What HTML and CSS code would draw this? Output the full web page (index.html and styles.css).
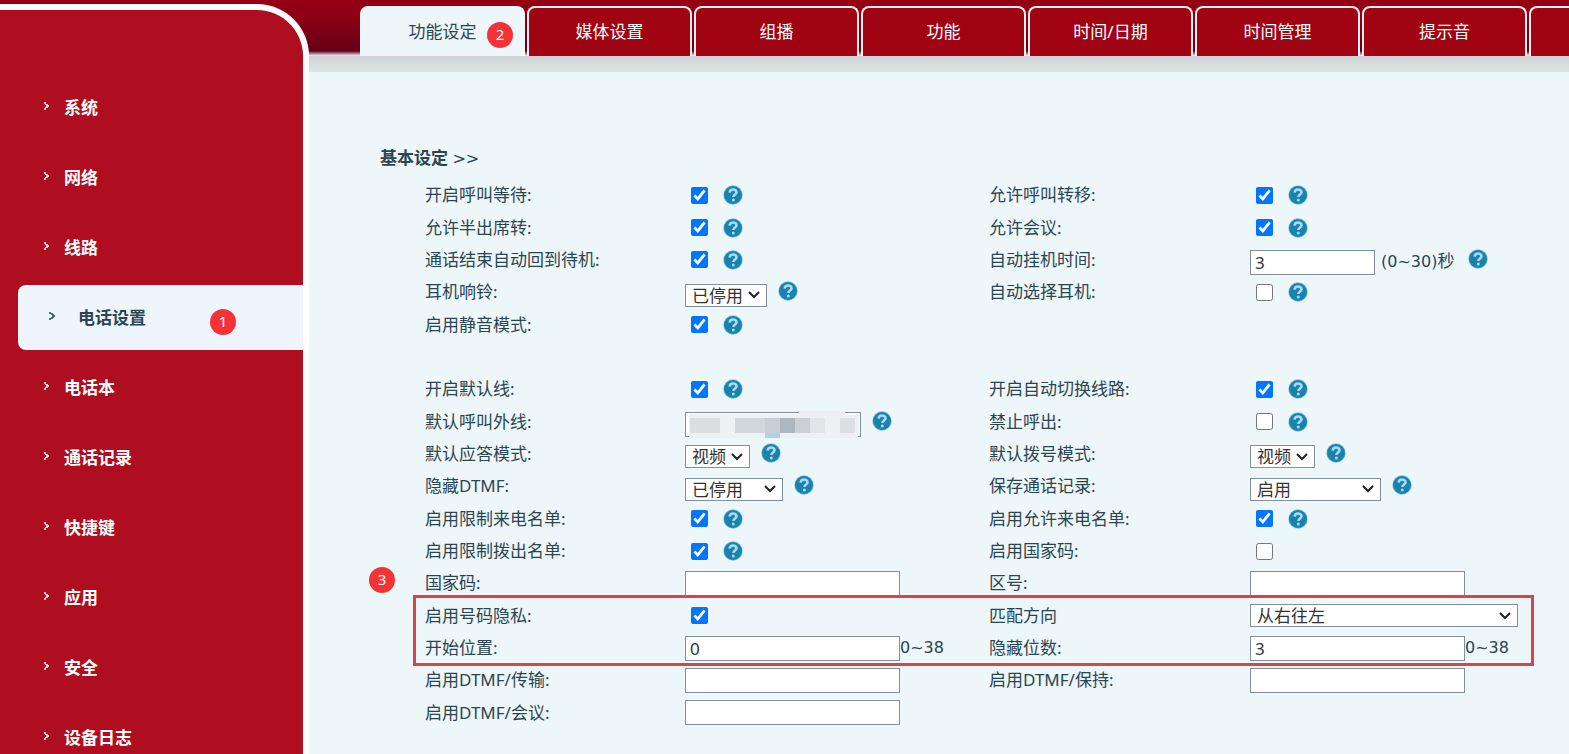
FILE: index.html
```html
<!DOCTYPE html>
<html lang="zh-CN">
<head>
    <meta charset="UTF-8">
    <meta name="viewport" content="width=device-width, initial-scale=1.0">
    <title>电话设置</title>
    <link rel="stylesheet" href="styles.css">
</head>
<body>
    <!-- shared icons -->
    <svg class="defs" width="0" height="0">
        <symbol id="help" viewBox="0 0 20 20">
            <circle cx="10" cy="10" r="9.7" fill="#7cc0dc"/>
            <circle cx="10" cy="10" r="9" fill="#1b82ae"/>
            <path d="M6.6 7.600C6.800 5.500 8.200 4.500 10.100 4.500c1.900 0 3.400 1 3.400 2.800 0 2.300-3.100 2.300-3.100 4.800" fill="none" stroke="#a5dcf2" stroke-width="2.600"/>
            <circle cx="10.300" cy="15" r="1.500" fill="#a5dcf2"/>
        </symbol>
        <symbol id="arrow" viewBox="0 0 8 10">
            <path d="M1 1h2v2h2v1h1v2H5v1H3v2H1V7h1V6h1V4H2V3H1z" fill="currentColor"/>
        </symbol>
        <symbol id="arrowOn" viewBox="0 0 8 10">
            <path d="M1 1h2v1h2v1h1v1h1v2H6v1H5v1H3v1H1V7h2V6h1V4H3V3H1z" fill="currentColor"/>
        </symbol>
    </svg>

    <nav class="sidebar">
        <a href="#"><svg class="arrow"><use href="#arrow"/></svg>系统</a>
        <a href="#"><svg class="arrow"><use href="#arrow"/></svg>网络</a>
        <a href="#"><svg class="arrow"><use href="#arrow"/></svg>线路</a>
        <a href="#" class="active"><svg class="arrow"><use href="#arrowOn"/></svg>电话设置<span class="badge badge1">1</span></a>
        <a href="#"><svg class="arrow"><use href="#arrow"/></svg>电话本</a>
        <a href="#"><svg class="arrow"><use href="#arrow"/></svg>通话记录</a>
        <a href="#"><svg class="arrow"><use href="#arrow"/></svg>快捷键</a>
        <a href="#"><svg class="arrow"><use href="#arrow"/></svg>应用</a>
        <a href="#"><svg class="arrow"><use href="#arrow"/></svg>安全</a>
        <a href="#"><svg class="arrow"><use href="#arrow"/></svg>设备日志</a>
    </nav>

    <main>
        <div class="tabs">
            <a href="#" class="active">功能设定<span class="badge badge2">2</span></a>
            <a href="#">媒体设置</a>
            <a href="#">组播</a>
            <a href="#">功能</a>
            <a href="#">时间/日期</a>
            <a href="#">时间管理</a>
            <a href="#">提示音</a>
            <a href="#" aria-label="更多"></a>
        </div>
        <div class="shade"></div>

        <h2>基本设定 <span class="wide">&gt;&gt;</span></h2>

        <form class="settings">
            <label class="c1 r1" for="callWaiting">开启呼叫等待:</label>
            <div class="c2 r1"><input type="checkbox" id="callWaiting" checked><svg class="help"><use href="#help"/></svg></div>
            <label class="c3 r1" for="transfer">允许呼叫转移:</label>
            <div class="c4 r1"><input type="checkbox" id="transfer" checked><svg class="help"><use href="#help"/></svg></div>

            <label class="c1 r2" for="semi">允许半出席转:</label>
            <div class="c2 r2"><input type="checkbox" id="semi" checked><svg class="help"><use href="#help"/></svg></div>
            <label class="c3 r2" for="conference">允许会议:</label>
            <div class="c4 r2"><input type="checkbox" id="conference" checked><svg class="help"><use href="#help"/></svg></div>

            <label class="c1 r3" for="onHook">通话结束自动回到待机:</label>
            <div class="c2 r3"><input type="checkbox" id="onHook" checked><svg class="help"><use href="#help"/></svg></div>
            <label class="c3 r3" for="hangTime">自动挂机时间:</label>
            <div class="c4 r3 low"><input type="text" class="short" id="hangTime" value="3"><span class="unit"><span class="wide">(0~30)</span>秒</span><svg class="help"><use href="#help"/></svg></div>

            <label class="c1 r4" for="ring">耳机响铃:</label>
            <div class="c2 r4 low"><select class="w82" id="ring"><option>已停用</option></select><svg class="help"><use href="#help"/></svg></div>
            <label class="c3 r4" for="headset">自动选择耳机:</label>
            <div class="c4 r4"><input type="checkbox" id="headset"><svg class="help"><use href="#help"/></svg></div>

            <label class="c1 r5" for="mute">启用静音模式:</label>
            <div class="c2 r5"><input type="checkbox" id="mute" checked><svg class="help"><use href="#help"/></svg></div>

            <label class="c1 r7" for="defLine">开启默认线:</label>
            <div class="c2 r7"><input type="checkbox" id="defLine" checked><svg class="help"><use href="#help"/></svg></div>
            <label class="c3 r7" for="autoLine">开启自动切换线路:</label>
            <div class="c4 r7"><input type="checkbox" id="autoLine" checked><svg class="help"><use href="#help"/></svg></div>

            <label class="c1 r8" for="extLine">默认呼叫外线:</label>
            <div class="c2 r8 low">
                <span class="masked">
                    <input type="text" id="extLine">
                    <svg class="mosaic" viewBox="0 0 176 28">
                        <path fill="#edf1f4" d="M4 3h110V0h46v4h14v18h-1v5H4z"/>
                        <path fill="#dadee1" d="M5 7h30v15H5z"/>
                        <path fill="#d2d7dc" d="M50 7h30v15H50z"/>
                        <path fill="#c8cfd5" d="M80 7h15v15H80z"/>
                        <path fill="#aeb7be" d="M95 7h15v15H95z"/>
                        <path fill="#cbd0d5" d="M110 7h15v15h-15z"/>
                        <path fill="#e1e4e8" d="M125 7h15v15h-15z"/>
                        <path fill="#dce0e3" d="M155 7h15v15h-15z"/>
                        <path fill="#b5d1e1" d="M80 22h15v5H80z"/>
                    </svg>
                </span>
                <svg class="help"><use href="#help"/></svg>
            </div>
            <label class="c3 r8" for="forbid">禁止呼出:</label>
            <div class="c4 r8"><input type="checkbox" id="forbid"><svg class="help"><use href="#help"/></svg></div>

            <label class="c1 r9" for="answerMode">默认应答模式:</label>
            <div class="c2 r9 low"><select class="w65" id="answerMode"><option>视频</option></select><svg class="help"><use href="#help"/></svg></div>
            <label class="c3 r9" for="dialMode">默认拨号模式:</label>
            <div class="c4 r9 low"><select class="w65" id="dialMode"><option>视频</option></select><svg class="help"><use href="#help"/></svg></div>

            <label class="c1 r10" for="hideDtmf">隐藏DTMF:</label>
            <div class="c2 r10 low"><select class="w98" id="hideDtmf"><option>已停用</option></select><svg class="help"><use href="#help"/></svg></div>
            <label class="c3 r10" for="saveLog">保存通话记录:</label>
            <div class="c4 r10 low"><select class="w131" id="saveLog"><option>启用</option></select><svg class="help"><use href="#help"/></svg></div>

            <label class="c1 r11" for="limitIn">启用限制来电名单:</label>
            <div class="c2 r11"><input type="checkbox" id="limitIn" checked><svg class="help"><use href="#help"/></svg></div>
            <label class="c3 r11" for="allowIn">启用允许来电名单:</label>
            <div class="c4 r11"><input type="checkbox" id="allowIn" checked><svg class="help"><use href="#help"/></svg></div>

            <label class="c1 r12" for="limitOut">启用限制拨出名单:</label>
            <div class="c2 r12"><input type="checkbox" id="limitOut" checked><svg class="help"><use href="#help"/></svg></div>
            <label class="c3 r12" for="useCountry">启用国家码:</label>
            <div class="c4 r12"><input type="checkbox" id="useCountry"></div>

            <label class="c1 r13" for="country">国家码:</label>
            <div class="c2 r13"><input type="text" id="country"></div>
            <label class="c3 r13" for="area">区号:</label>
            <div class="c4 r13"><input type="text" id="area"></div>

            <label class="c1 r14" for="privacy">启用号码隐私:</label>
            <div class="c2 r14"><input type="checkbox" id="privacy" checked></div>
            <label class="c3 r14" for="direction">匹配方向</label>
            <div class="c4 r14"><select class="w268" id="direction"><option>从右往左</option></select></div>

            <label class="c1 r15" for="start">开始位置:</label>
            <div class="c2 r15"><input type="text" id="start" value="0"><span class="wide">0~38</span></div>
            <label class="c3 r15" for="digits">隐藏位数:</label>
            <div class="c4 r15"><input type="text" id="digits" value="3"><span class="wide">0~38</span></div>

            <label class="c1 r16" for="dtmfTransfer">启用DTMF/传输:</label>
            <div class="c2 r16"><input type="text" id="dtmfTransfer"></div>
            <label class="c3 r16" for="dtmfHold">启用DTMF/保持:</label>
            <div class="c4 r16"><input type="text" id="dtmfHold"></div>

            <label class="c1 r17" for="dtmfConf">启用DTMF/会议:</label>
            <div class="c2 r17"><input type="text" id="dtmfConf"></div>

            <div class="highlight"><span class="badge badge3">3</span></div>
        </form>
    </main>
</body>
</html>
```

FILE: styles.css
```css
* {
    box-sizing: border-box;
}
body {
    margin: 0;
    height: 100vh;
    overflow: hidden;
    display: flex;
    background: linear-gradient(#960014, #8a0015 20px, #620018 51px, #edf6f9 56px);
    color: #2b4552;
    font-family: "Noto Sans", "Noto Sans CJK SC", sans-serif;
    font-size: 17px;
    line-height: 24px;
}
a {
    color: inherit;
    text-decoration: none;
}
.defs {
    position: absolute;
}

/* left menu */
.sidebar {
    width: 309px;
    flex-shrink: 0;
    margin-top: 4px;
    padding-top: 65px;
    border: 6px solid white;
    border-left: 0;
    border-bottom: 0;
    border-top-right-radius: 52px;
    background-color: #ae0e1f;
}
.sidebar a {
    position: relative;
    display: flex;
    align-items: center;
    gap: 13px;
    height: 65px;
    margin-bottom: 5px;
    padding: 1px 0 0 43px;
    color: white;
    font-weight: bold;
}
.sidebar .active {
    gap: 22px;
    margin-left: 18px;
    padding-left: 30px;
    border-radius: 8px 0 0 8px;
    background-color: #eff5fc;
    color: #2b4552;
}
.arrow {
    width: 8px;
    height: 10px;
    margin-bottom: 4px;
    opacity: 0.8;
}
.badge {
    position: absolute;
    width: 26px;
    height: 26px;
    border-radius: 50%;
    background-color: #f53336;
    color: white;
    font-size: 15px;
    font-weight: normal;
    line-height: 24px;
    text-align: center;
}
.badge1 {
    left: 192px;
    top: 24px;
}
.badge2 {
    right: 10px;
    top: 14px;
}
.badge3 {
    left: -47px;
    top: -31px;
}

/* top tabs */
main {
    flex: 1;
    min-width: 0;
}
.tabs {
    display: flex;
    gap: 2px;
    height: 56px;
    padding: 6px 0 0 51px;
    overflow: hidden;
}
.tabs a {
    position: relative;
    flex: 0 0 165px;
    border: 2px solid #fbeef0;
    border-bottom: 0;
    border-radius: 8px 8px 0 0;
    background-color: #a00412;
    color: white;
    line-height: 48px;
    text-align: center;
}
.tabs .active {
    border-color: #edf6f9;
    background-color: #edf6f9;
    color: #2b4552;
}
.tabs .badge {
    line-height: 24px;
}
.shade {
    height: 16px;
    background: linear-gradient(#d0cfd5, #d3dadc 6px, #dbe3e5);
}

h2 {
    margin: 74px 0 8px 71px;
    font-size: 17px;
    line-height: 24px;
}
.wide {
    font-family: "DejaVu Sans", sans-serif;
    font-size: 16px;
}
h2 .wide {
    font-weight: normal;
}

/* settings, 17 equal lines */
.settings {
    display: grid;
    grid-template-columns: 260fr 304fr 261fr 319fr;
    grid-template-rows: repeat(17, 1fr);
    height: 550px;
    padding-left: 116px;
}
.settings > label, .settings > div {
    display: flex;
    align-items: center;
    min-width: 0;
    min-height: 0;
}
.c1 { grid-column: 1; }
.c2 { grid-column: 2; }
.c3 { grid-column: 3; }
.c4 { grid-column: 4; }
.r1 { grid-row: 1; }
.r2 { grid-row: 2; }
.r3 { grid-row: 3; }
.r4 { grid-row: 4; }
.r5 { grid-row: 5; }
.r7 { grid-row: 7; }
.r8 { grid-row: 8; }
.r9 { grid-row: 9; }
.r10 { grid-row: 10; }
.r11 { grid-row: 11; }
.r12 { grid-row: 12; }
.r13 { grid-row: 13; }
.r14 { grid-row: 14; }
.r15 { grid-row: 15; }
.r16 { grid-row: 16; }
.r17 { grid-row: 17; }

input[type="checkbox"] {
    width: 17px;
    height: 17px;
    margin: 0 0 0 6px;
}
input[type="text"] {
    width: 215px;
    height: 25px;
    padding: 0 4px;
    border: 1px solid #7f8f9c;
    background-color: white;
    color: #333;
    font: inherit;
}
input[type="text"].short {
    width: 125px;
}
select {
    appearance: none;
    height: 23px;
    padding: 0 0 0 6px;
    border: 1px solid #7f8f9c;
    border-radius: 0;
    background: white url("data:image/svg+xml,%3Csvg xmlns='http://www.w3.org/2000/svg' width='12' height='8'%3E%3Cpath d='M1 1l5 5 5-5' fill='none' stroke='%23222' stroke-width='2'/%3E%3C/svg%3E") no-repeat right 6px center;
    color: #333;
    font: inherit;
    line-height: 21px;
}
.w65 { width: 65px; }
.w82 { width: 82px; }
.w98 { width: 98px; }
.w131 { width: 131px; }
.w268 { width: 268px; }
.help {
    width: 20px;
    height: 20px;
    margin-left: 15px;
    flex-shrink: 0;
}
/* boxes sit a little under the help icon */
.low select, .low input {
    margin-top: 6px;
}
.low .help {
    margin: 0 0 2px 11px;
}
.unit {
    margin: 3px 3px 0 6px;
}
.masked {
    position: relative;
    width: 176px;
}
.masked input[type="text"] {
    display: block;
    width: 176px;
}
.mosaic {
    position: absolute;
    left: 0;
    top: 5px;
    width: 176px;
    height: 28px;
}
.settings .highlight {
    position: relative;
    grid-column: 1 / -1;
    grid-row: 14 / 16;
    margin: -5px 35px -2px -12px;
    border: 3px solid #d54549;
    pointer-events: none;
}
```
